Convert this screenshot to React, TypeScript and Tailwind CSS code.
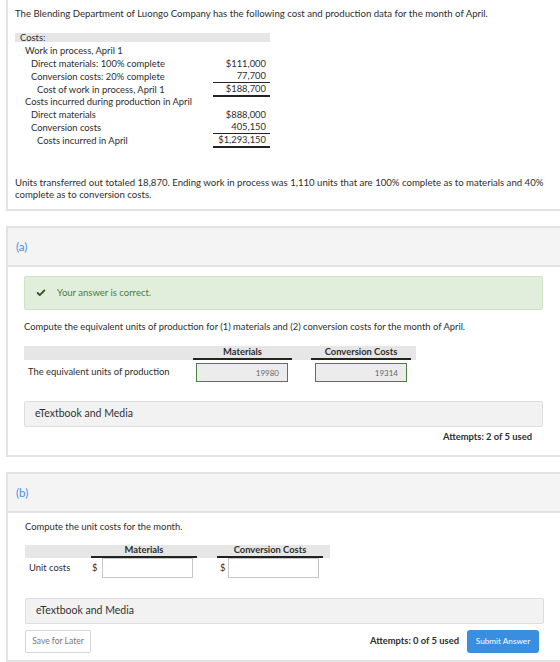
import { Check } from 'lucide-react';

const costRows = [
  { label: 'Work in process, April 1', indent: 'pl-[10px]', amount: '' },
  { label: 'Direct materials: 100% complete', indent: 'pl-[16px]', amount: '$111,000' },
  { label: 'Conversion costs: 20% complete', indent: 'pl-[16px]', amount: '77,700', rule: 'border-b-[1.5px]' },
  { label: 'Cost of work in process, April 1', indent: 'pl-[22px]', amount: '$188,700', rule: 'border-b-2' },
  { label: 'Costs incurred during production in April', indent: 'pl-[10px]', amount: '' },
  { label: 'Direct materials', indent: 'pl-[16px]', amount: '$888,000' },
  { label: 'Conversion costs', indent: 'pl-[16px]', amount: '405,150', rule: 'border-b-[1.5px]' },
  { label: 'Costs incurred in April', indent: 'pl-[22px]', amount: '$1,293,150', rule: 'border-b-2' },
];

function PartHeader({ label }: { label: string }) {
  return (
    <div className="flex h-[39px] items-center border-b-2 border-[#e2e2e2] bg-[#f4f4f4] pl-[8px] text-[11.5px] text-[#4a90e2]">
      {label}
    </div>
  );
}

function MediaBox() {
  return (
    <div className="flex h-[26px] w-[519px] items-center rounded-[2px] border border-[#dedede] bg-[#f2f2f2] pl-[10px] text-[10.5px] text-[#333]">
      eTextbook and Media
    </div>
  );
}

export default function App() {
  return (
    <div className="h-[662px] w-[560px] overflow-hidden bg-white font-['Lato',sans-serif] text-[#2e2e2e]">
      <div className="pl-[6px]">
        {/* problem statement */}
        <div className="w-[570px] border-b-2 border-l-2 border-[#e2e2e2] pb-[8px] pl-[7px] pt-[8px] text-[9.6px] leading-[12px]">
          <p>
            The Blending Department of Luongo Company has the following cost and production data for the month of April.
          </p>
          <div className="mt-[13px] w-[255px] text-[9.4px]">
            <div className="mb-[3px] flex h-[9px] items-center bg-[#e6e6e6] pl-[5px] leading-[9px]">Costs:</div>
            {costRows.map((r) => (
              <div key={r.label} className="flex h-[12.75px] items-center leading-[12px]">
                <div className={`flex-1 whitespace-nowrap ${r.indent}`}>{r.label}</div>
                <div className={`w-[57px] text-right pr-[4px] ${r.rule ?? ''} border-[#222]`}>{r.amount}</div>
              </div>
            ))}
          </div>
          <p className="mt-[30px] w-[535px]">
            Units transferred out totaled 18,870. Ending work in process was 1,110 units that are 100% complete as to
            materials and 40% complete as to conversion costs.
          </p>
        </div>

        {/* part (a) */}
        <div className="mt-[15px] w-[570px] border-b-2 border-l-2 border-t-2 border-[#e2e2e2]">
          <PartHeader label="(a)" />
          <div className="pl-[16px]">
            <div className="mt-[9px] flex h-[34px] w-[519px] items-center rounded-[2px] border border-[#cfe3c6] bg-[#e1eedb] pl-[11px] text-[9.5px] text-[#4b7b3f]">
              <Check className="h-[10px] w-[10px] text-[#2f5a25]" strokeWidth={4.5} />
              <span className="ml-[11px]">Your answer is correct.</span>
            </div>
            <p className="mt-[11px] text-[9.4px] leading-[12px]">
              Compute the equivalent units of production for (1) materials and (2) conversion costs for the month of April.
            </p>
            <div className="mt-[13px] w-[392px] text-[9.4px]">
              <div className="flex h-[14px] bg-[#e6e6e6]">
                <div className="w-[169px]" />
                <div className="flex w-[99px] items-center justify-center border-b-2 border-[#222] font-bold">Materials</div>
                <div className="w-[19px]" />
                <div className="flex w-[100px] items-center justify-center border-b-2 border-[#222] font-bold">Conversion Costs</div>
              </div>
              <div className="mt-[3px] flex items-center">
                <div className="w-[169px] whitespace-nowrap pl-[4px]">The equivalent units of production</div>
                <div className="w-[99px] pl-[3px]">
                  <div className="flex h-[19px] w-[92px] items-center justify-end border-[1.5px] border-[#4d7f43] bg-[#ececec] pr-[8px] text-[8px] text-[#666]">
                    19980
                  </div>
                </div>
                <div className="w-[19px]" />
                <div className="w-[100px] pl-[4px]">
                  <div className="flex h-[19px] w-[92px] items-center justify-end border-[1.5px] border-[#4d7f43] bg-[#ececec] pr-[8px] text-[8px] text-[#666]">
                    19314
                  </div>
                </div>
              </div>
            </div>
            <div className="mt-[19px]">
              <MediaBox />
            </div>
            <div className="flex w-[508px] justify-end pb-[12px] pt-[4px] text-[9.4px] font-bold leading-[12px]">
              Attempts: 2 of 5 used
            </div>
          </div>
        </div>

        {/* part (b) */}
        <div className="mt-[15px] w-[570px] border-b-2 border-l-2 border-t-2 border-[#e2e2e2]">
          <PartHeader label="(b)" />
          <div className="pl-[17px]">
            <p className="mt-[8px] text-[9.4px] leading-[12px]">Compute the unit costs for the month.</p>
            <div className="mt-[12px] w-[305px] text-[9.4px]">
              <div className="flex h-[13px] bg-[#e6e6e6]">
                <div className="w-[66px]" />
                <div className="flex w-[106px] items-center justify-center border-b-2 border-[#222] font-bold">Materials</div>
                <div className="w-[20px]" />
                <div className="flex w-[106px] items-center justify-center border-b-2 border-[#222] font-bold">Conversion Costs</div>
              </div>
              <div className="flex items-center">
                <div className="w-[66px] whitespace-nowrap pl-[4px]">Unit costs</div>
                <div className="flex w-[106px] items-center">
                  <span className="w-[11px] pl-[1px]">$</span>
                  <div className="h-[20px] w-[91px] border border-[#c8c8c8] bg-white" />
                </div>
                <div className="w-[20px]" />
                <div className="flex w-[106px] items-center">
                  <span className="w-[11px] pl-[3px]">$</span>
                  <div className="h-[20px] w-[91px] border border-[#c8c8c8] bg-white" />
                </div>
              </div>
            </div>
            <div className="mt-[20px]">
              <MediaBox />
            </div>
            <div className="mt-[6px] flex w-[514px] items-center pb-[7px]">
              <button className="h-[23px] w-[66px] rounded-[2px] border border-[#d6d6d6] bg-white text-[8.5px] text-[#777]">
                Save for Later
              </button>
              <span className="ml-auto text-[9.4px] font-bold">Attempts: 0 of 5 used</span>
              <button className="ml-[8px] h-[23px] w-[72px] rounded-[3px] bg-[#3a8ee0] text-[8.2px] text-white">
                Submit Answer
              </button>
            </div>
          </div>
        </div>
      </div>
    </div>
  );
}
